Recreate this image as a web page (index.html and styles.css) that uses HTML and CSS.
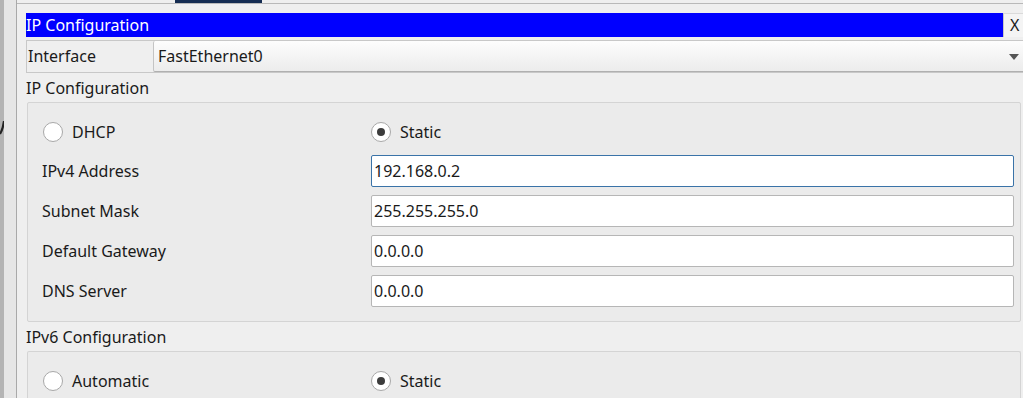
FILE: index.html
```html
<!DOCTYPE html>
<html>
<head>
<meta charset="utf-8">
<link rel="stylesheet" href="styles.css">
</head>
<body>
<div class="app">
  <div class="gutter">
    <div class="gutter-dark">
      <svg class="curve" width="4" height="14" viewBox="0 0 4 14"><path d="M4 0 Q3 8 0 13" stroke="#222" stroke-width="2.2" fill="none"/></svg>
    </div>
    <div class="gutter-light"></div>
  </div>
  <div class="main">
    <div class="topstrip"><div class="tab"></div></div>
    <div class="content">
      <div class="titlebar">
        <div class="title">IP Configuration</div>
        <div class="close">X</div>
      </div>
      <div class="iface">
        <div class="iface-label">Interface</div>
        <div class="combo"><span>FastEthernet0</span><span class="arrow"></span></div>
      </div>
      <div class="section-title">IP Configuration</div>
      <div class="group">
        <div class="radio-row">
          <label class="radio"><span class="dot"></span>DHCP</label>
          <label class="radio"><span class="dot on"></span>Static</label>
        </div>
        <div class="field"><span class="flabel">IPv4 Address</span><div class="input focus">192.168.0.2</div></div>
        <div class="field"><span class="flabel">Subnet Mask</span><div class="input">255.255.255.0</div></div>
        <div class="field"><span class="flabel">Default Gateway</span><div class="input">0.0.0.0</div></div>
        <div class="field"><span class="flabel">DNS Server</span><div class="input">0.0.0.0</div></div>
      </div>
      <div class="section-title">IPv6 Configuration</div>
      <div class="group g6">
        <div class="radio-row">
          <label class="radio"><span class="dot"></span>Automatic</label>
          <label class="radio"><span class="dot on"></span>Static</label>
        </div>
      </div>
    </div>
  </div>
</div>
</body>
</html>
```
FILE: styles.css
```css
* { box-sizing: border-box; }
html, body { margin: 0; padding: 0; }
body {
  width: 1023px;
  height: 398px;
  overflow: hidden;
  background: #efefef;
  font-family: "Noto Sans", "Open Sans", sans-serif;
  font-size: 16px;
  color: #1a1a1a;
}
.app { display: flex; height: 398px; overflow: hidden; }
.gutter { display: flex; width: 17px; flex: none; }
.gutter-dark { width: 4px; background: #b4b4b4; padding-top: 121px; }
.curve { display: block; }
.gutter-light { width: 13px; background: #e6e6e6; border-right: 1px solid #a9a9a9; }
.main { flex: 1; min-width: 0; display: flex; flex-direction: column; overflow: hidden; }
.topstrip { height: 4px; flex: none; border-bottom: 1px solid #b9b9b9; padding-left: 158px; }
.tab { width: 87px; height: 3px; background: #152c52; }
.content { padding: 9px 0 0 9px; display: flex; flex-direction: column; }
.titlebar { display: flex; height: 24px; flex: none; }
.title { flex: 1; background: #0000ff; color: #fff; line-height: 25px; }
.close {
  width: 20px; background: #f4f4f4; border-left: 1px solid #c8c8c8; border-top: 1px solid #dadada;
  color: #1a1a1a; line-height: 23px; padding-left: 6px;
}
.iface { display: flex; height: 33px; flex: none; margin-top: 3px; border-top: 1px solid #c8c8c8; border-bottom: 1px solid #c8c8c8; }
.iface-label { width: 127px; border-left: 1px solid #c8c8c8; line-height: 31px; padding-left: 1px; }
.combo {
  flex: 1; display: flex; align-items: center; justify-content: space-between;
  background: linear-gradient(#fdfdfd, #ececec);
  border-left: 1px solid #c4c4c4; border-bottom: 1px solid #b0b0b0;
  padding: 0 4px 0 4px; border-radius: 2px 0 0 2px;
}
.arrow { width: 0; height: 0; border-left: 5.5px solid transparent; border-right: 5.5px solid transparent; border-top: 6px solid #555; margin-top: 2px; }
.section-title { height: 29px; flex: none; line-height: 30px; padding-left: 0; }
.group {
  flex: none;
  margin-left: 1px; margin-right: 2px;
  background: #ebebeb; border: 1px solid #d4d4d4; border-radius: 2px;
  padding: 19px 6px 14px 15px;
}
.g6 { border-bottom: none; padding-bottom: 20px; }
.radio-row { display: flex; height: 20px; align-items: center; margin-bottom: 13px; }
.radio { display: flex; align-items: center; width: 328px; }
.dot {
  width: 20px; height: 20px; border-radius: 50%; background: #fff; border: 1px solid #a8a8a8;
  margin-right: 9px; flex: none; position: relative;
}
.dot.on::after {
  content: ""; position: absolute; left: 5px; top: 5px; width: 8px; height: 8px; border-radius: 50%; background: #3c3c3c;
}
.field { display: flex; align-items: center; height: 32px; margin-bottom: 8px; }
.field:last-child { margin-bottom: 0; }
.flabel { width: 328px; flex: none; margin-left: -1px; margin-right: 1px; }
.input {
  flex: 1; height: 32px; background: #fff; border: 1px solid #b6b6b6; border-radius: 2px;
  line-height: 30px; padding-left: 2px;
}
.input.focus { border-color: #3a73a8; }
```
